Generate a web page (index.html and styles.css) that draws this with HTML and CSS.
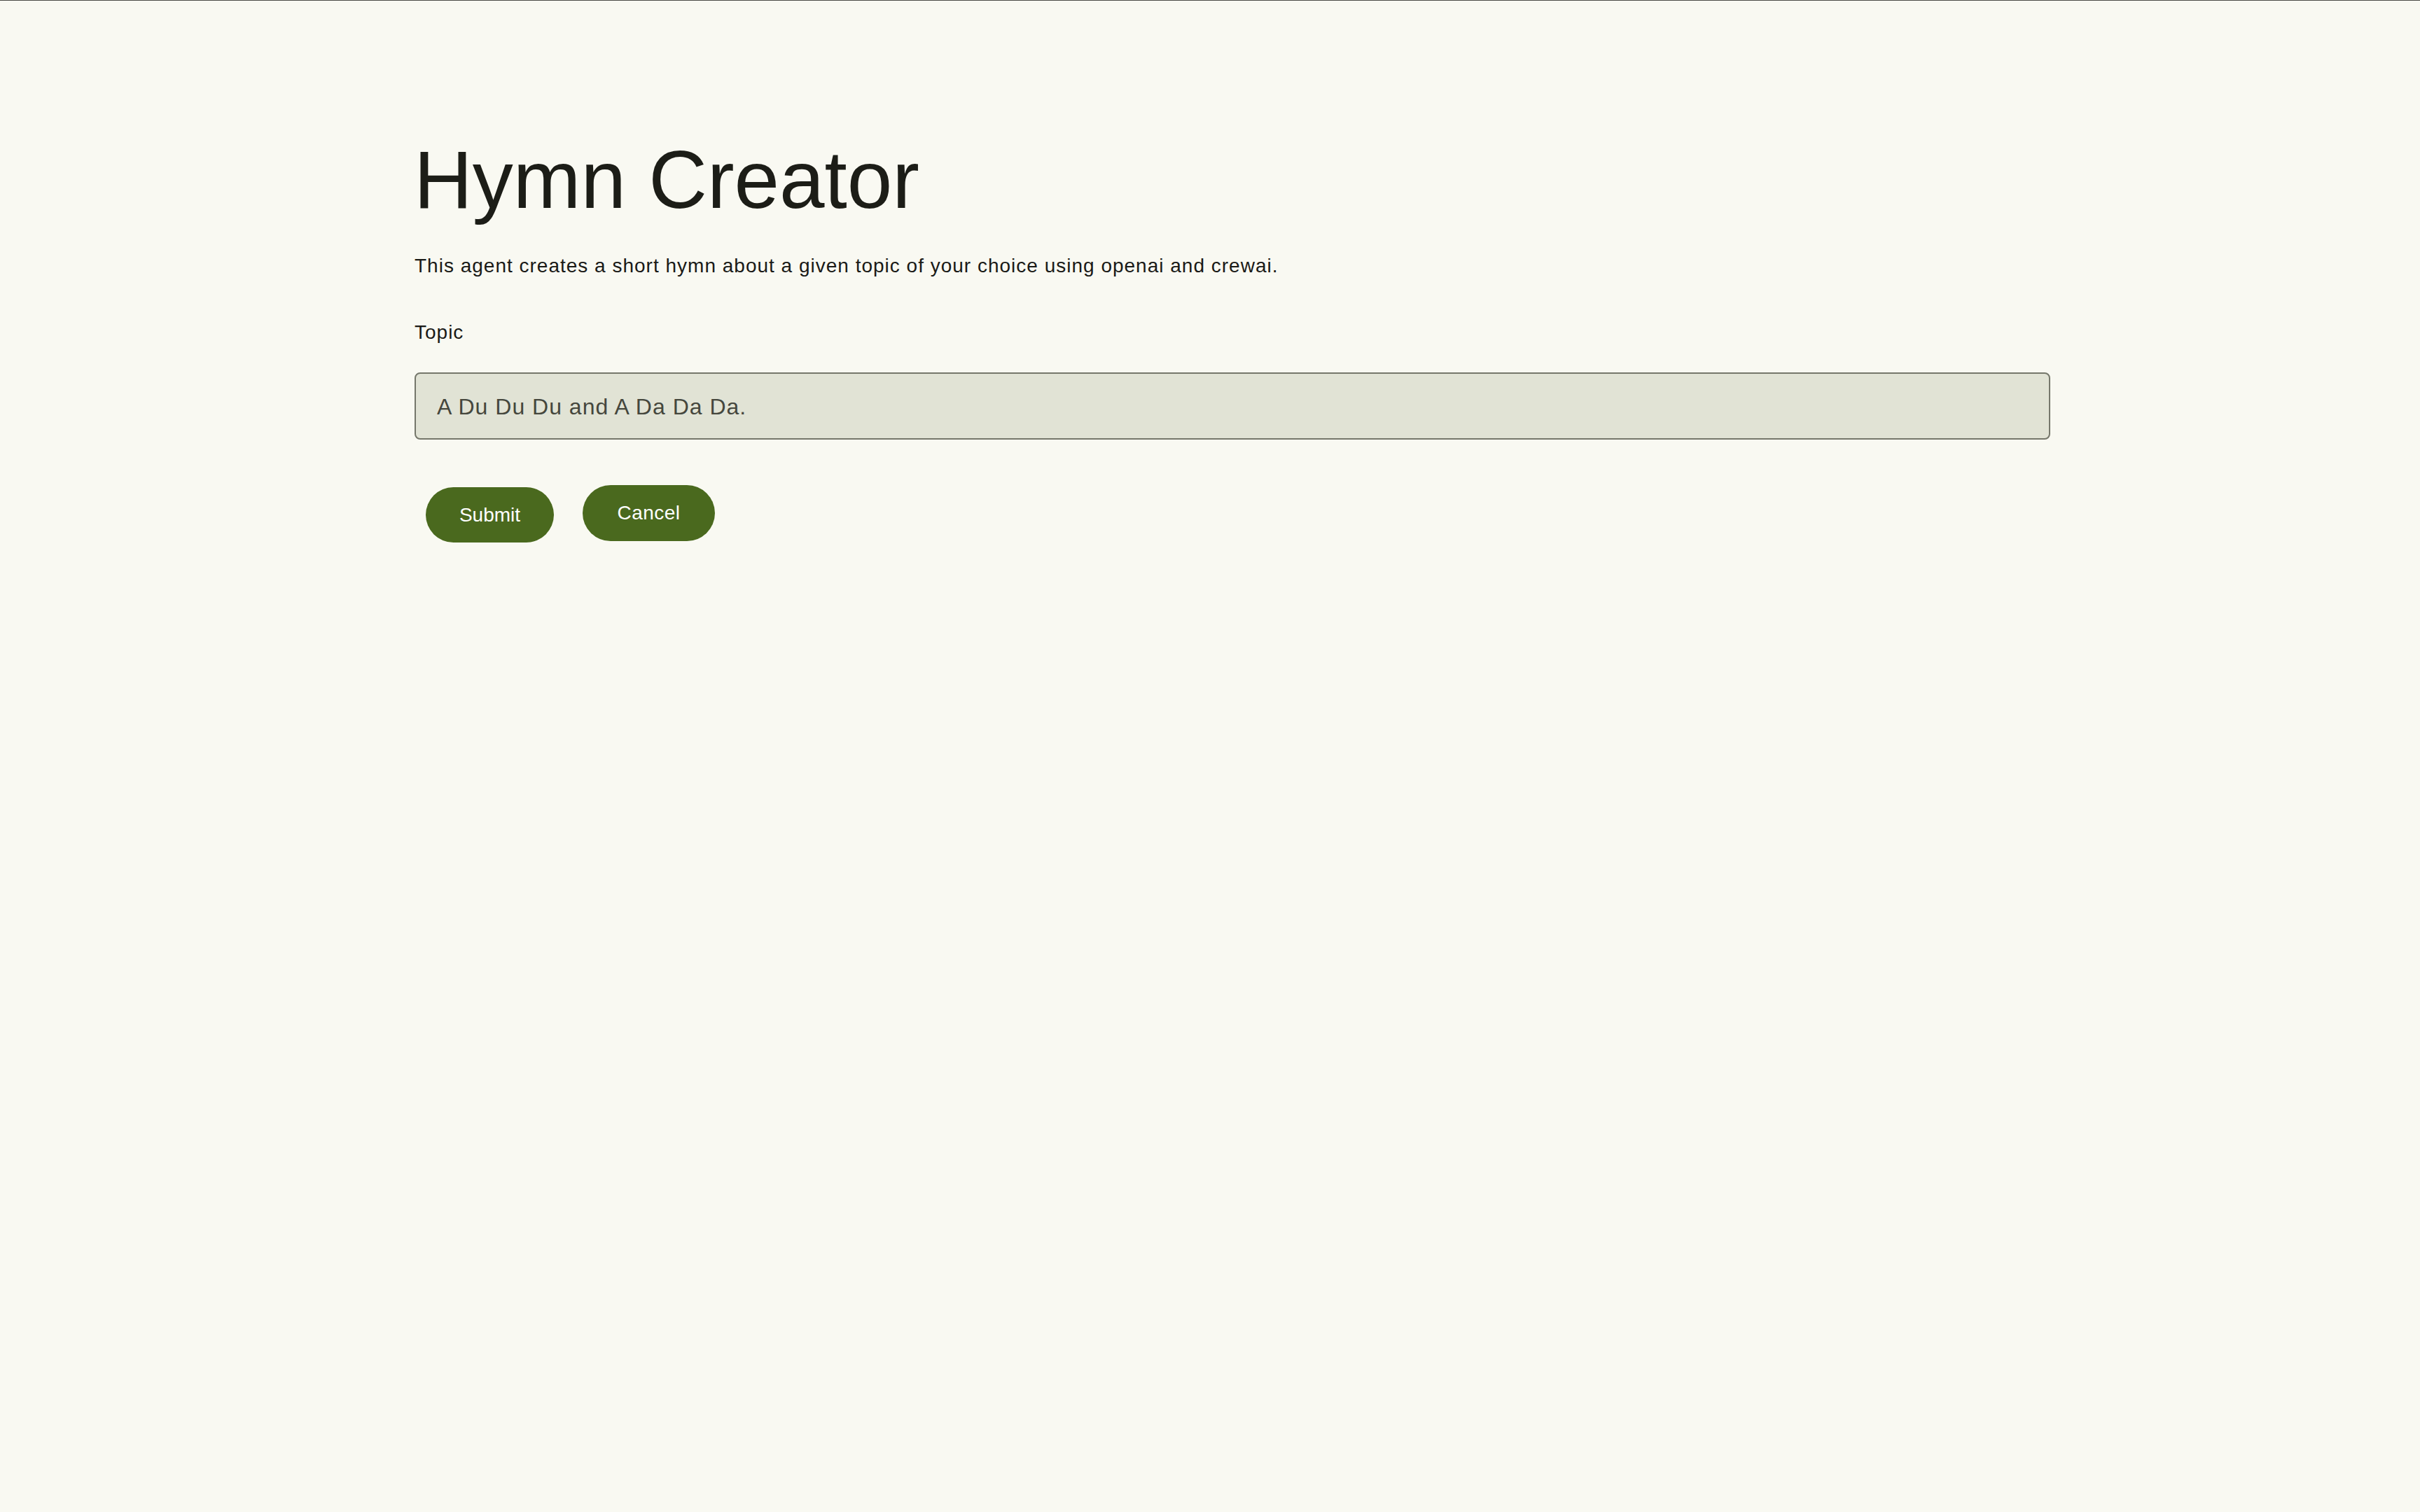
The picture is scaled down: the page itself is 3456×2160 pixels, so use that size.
FILE: index.html
```html
<!DOCTYPE html>
<html lang="en">
<head>
<meta charset="utf-8">
<title>Hymn Creator</title>
<link rel="stylesheet" href="styles.css">
</head>
<body>
<main class="page">
  <h1 class="title">Hymn Creator</h1>
  <p class="desc">This agent creates a short hymn about a given topic of your choice using openai and crewai.</p>
  <form class="form">
    <label class="label" for="topic">Topic</label>
    <input class="field" id="topic" type="text" value="A Du Du Du and A Da Da Da.">
    <div class="actions">
      <button type="button" class="btn btn-submit">Submit</button>
      <button type="button" class="btn btn-cancel">Cancel</button>
    </div>
  </form>
</main>
</body>
</html>
```

FILE: styles.css
```css
html, body {
  margin: 0;
  padding: 0;
  background: #f9f9f2;
}

body {
  border-top: 1px solid #4a4a46;
  font-family: "Liberation Sans", Arial, Helvetica, sans-serif;
  color: #1a1b16;
  min-height: 2159px;
}

.page {
  width: 2336px;
  padding: 186px 0 0 592px;
  display: flex;
  flex-direction: column;
}

.title {
  margin: 0 0 0 -1px;
  font-size: 116px;
  line-height: 140px;
  font-weight: 400;
  color: #1c1d17;
}

.desc {
  margin: 33px 0 0;
  font-size: 28px;
  line-height: 40px;
  letter-spacing: 1px;
  color: #1a1a17;
}

.form {
  display: flex;
  flex-direction: column;
  margin-top: 55px;
}

.label {
  font-size: 28px;
  line-height: 40px;
  letter-spacing: 1px;
  color: #1a1a17;
}

.field {
  margin-top: 37px;
  box-sizing: border-box;
  width: 2336px;
  height: 96px;
  padding: 2px 30px 0;
  border: 2px solid #75776b;
  border-radius: 8px;
  background: #e1e3d5;
  font-family: "Liberation Sans", Arial, Helvetica, sans-serif;
  font-size: 32px;
  letter-spacing: 1px;
  color: #45473d;
  outline: none;
}

.actions {
  display: flex;
  align-items: flex-start;
  gap: 41px;
  margin-top: 65px;
  padding-left: 16px;
}

.btn {
  box-sizing: border-box;
  border: none;
  border-radius: 40px;
  background: #4a691e;
  color: #ffffff;
  font-family: "Liberation Sans", Arial, Helvetica, sans-serif;
  font-size: 28px;
  line-height: 32px;
  cursor: pointer;
}

.btn-submit {
  width: 183px;
  height: 79px;
  margin-top: 3px;
  padding: 0;
}

.btn-cancel {
  width: 189px;
  height: 80px;
  padding: 0;
  letter-spacing: 0.5px;
}
```
